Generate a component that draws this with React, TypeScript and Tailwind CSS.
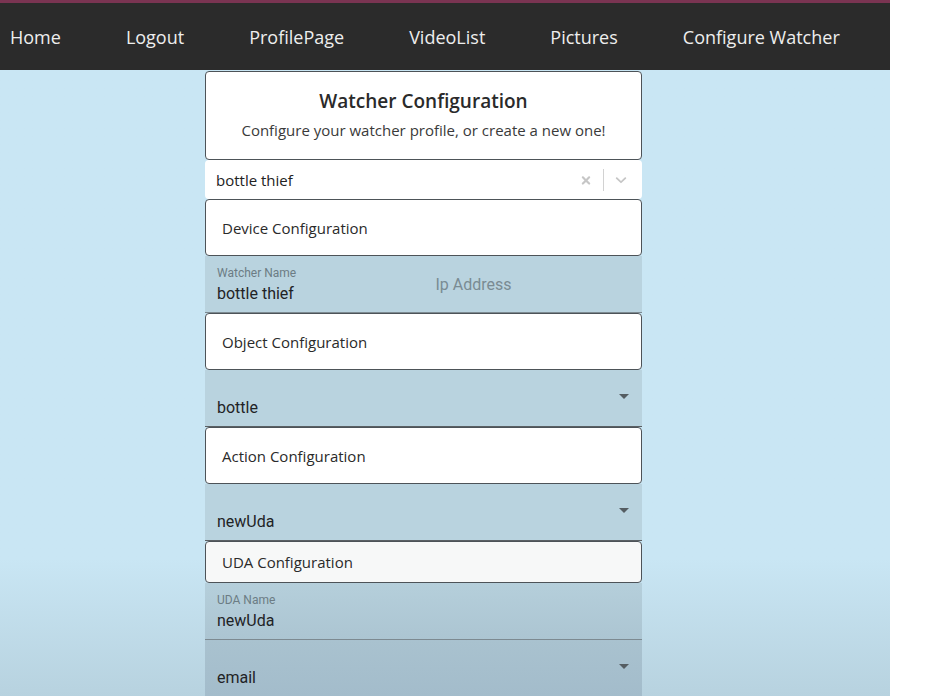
import React from 'react';

const navItems = ['Home', 'Logout', 'ProfilePage', 'VideoList', 'Pictures', 'Configure Watcher'];

function SectionCard({ title, tall = true, tint = false }: { title: string; tall?: boolean; tint?: boolean }) {
  return (
    <div
      className={[
        'flex items-center rounded-[4px] border border-[#4d5358] pl-4 text-[15px] text-[#2a2a2a]',
        tall ? 'h-[57px] pt-[2px]' : 'h-[42px]',
        tint ? 'bg-[#f7f8f8]' : 'bg-white',
      ].join(' ')}
      style={{ fontFamily: '"Open Sans", "Noto Sans", sans-serif' }}
    >
      {title}
    </div>
  );
}

function ArrowDrop() {
  return (
    <svg width="24" height="24" viewBox="0 0 24 24" className="fill-[#555d62]">
      <path d="M7 10l5 5 5-5z" />
    </svg>
  );
}

function FilledSelect({ value, bg }: { value: string; bg: string }) {
  return (
    <div
      className={`flex h-[57px] items-end justify-between border-b border-[#5a6064] pb-[8px] pl-3 pr-[6px] ${bg}`}
      style={{ fontFamily: 'Roboto, "Liberation Sans", sans-serif' }}
    >
      <span className="text-[16px] leading-[20px] text-[#1f2326]">{value}</span>
      <span className="mb-[10px]">
        <ArrowDrop />
      </span>
    </div>
  );
}

function FilledField({ label, value, bg }: { label: string; value: string; bg: string }) {
  return (
    <div
      className={`flex h-[57px] flex-col justify-end border-b border-[#7d8a91] pb-[8px] pl-3 ${bg}`}
      style={{ fontFamily: 'Roboto, "Liberation Sans", sans-serif' }}
    >
      <span className="text-[12px] leading-[14px] text-[#6c7c84]">{label}</span>
      <span className="mt-[4px] text-[16px] leading-[20px] text-[#1f2326]">{value}</span>
    </div>
  );
}

export default function App() {
  return (
    <div className="flex h-[696px] w-[945px] overflow-hidden bg-white">
      <div className="flex w-[890px] flex-col">
        <nav
          className="flex h-[70px] shrink-0 items-center gap-[65px] border-t-[3px] border-[#7a3452] bg-[#2b2b2b] pl-[10px] pt-[2px] text-[18px] text-[#eeeeee]"
          style={{ fontFamily: '"Open Sans", "Noto Sans", sans-serif' }}
        >
          {navItems.map((n) => (
            <span key={n}>{n}</span>
          ))}
        </nav>
        <main className="flex-1 bg-gradient-to-b from-[#c9e6f4] from-[78%] to-[#b7d2df] pl-[205px] pt-px">
          <div className="flex w-[437px] flex-col">
            <div
              className="flex h-[89px] flex-col items-center rounded-[4px] border border-[#4d5358] bg-white pt-[17px]"
              style={{ fontFamily: '"Open Sans", "Noto Sans", sans-serif' }}
            >
              <div className="text-[19px] font-semibold leading-[24px] text-[#2a2a2a]">Watcher Configuration</div>
              <div className="mt-[7px] text-[15px] leading-[20px] text-[#3a3a3a]">
                Configure your watcher profile, or create a new one!
              </div>
            </div>
            <div
              className="flex h-[39px] items-center justify-between rounded-[4px] bg-white pl-[11px] pr-[12px] pt-px"
              style={{ fontFamily: '"Open Sans", "Noto Sans", sans-serif' }}
            >
              <span className="text-[15px] text-[#222]">bottle thief</span>
              <div className="flex items-center">
                <svg width="18" height="18" viewBox="0 0 20 20" className="fill-[#c6c6c6]">
                  <path d="M14.35 14.85a1.2 1.2 0 0 1-1.7 0L10 12.2l-2.65 2.65a1.2 1.2 0 1 1-1.7-1.7L8.3 10.5 5.65 7.85a1.2 1.2 0 1 1 1.7-1.7L10 8.8l2.65-2.65a1.2 1.2 0 1 1 1.7 1.7L11.7 10.5l2.65 2.65a1.2 1.2 0 0 1 0 1.7z" />
                </svg>
                <span className="mx-[8px] h-[22px] w-px bg-[#d2d2d2]" />
                <svg width="18" height="18" viewBox="0 0 20 20" className="fill-[#c6c6c6]">
                  <path d="M4.52 7.28a1 1 0 0 1 1.4 0L10 11.1l4.08-3.82a1 1 0 1 1 1.4 1.42l-4.78 4.48a1 1 0 0 1-1.4 0L4.52 8.7a1 1 0 0 1 0-1.42z" />
                </svg>
              </div>
            </div>
            <SectionCard title="Device Configuration" />
            <div className="grid grid-cols-2 bg-[#b9d3df]">
              <FilledField label="Watcher Name" value="bottle thief" bg="bg-[#b9d3df]" />
              <div
                className="flex h-[57px] items-center border-b border-[#7d8a91] pl-3 pt-px text-[16px] text-[#7a8b93]"
                style={{ fontFamily: 'Roboto, "Liberation Sans", sans-serif' }}
              >
                Ip Address
              </div>
            </div>
            <SectionCard title="Object Configuration" />
            <FilledSelect value="bottle" bg="bg-[#b9d3df]" />
            <SectionCard title="Action Configuration" />
            <FilledSelect value="newUda" bg="bg-[#b9d3df]" />
            <SectionCard title="UDA Configuration" tall={false} tint />
            <FilledField label="UDA Name" value="newUda" bg="bg-gradient-to-b from-[#b5cfdb] to-[#acc5d2]" />
            <FilledSelect value="email" bg="bg-gradient-to-b from-[#a9c2cf] to-[#a3bccb]" />
          </div>
        </main>
      </div>
    </div>
  );
}
